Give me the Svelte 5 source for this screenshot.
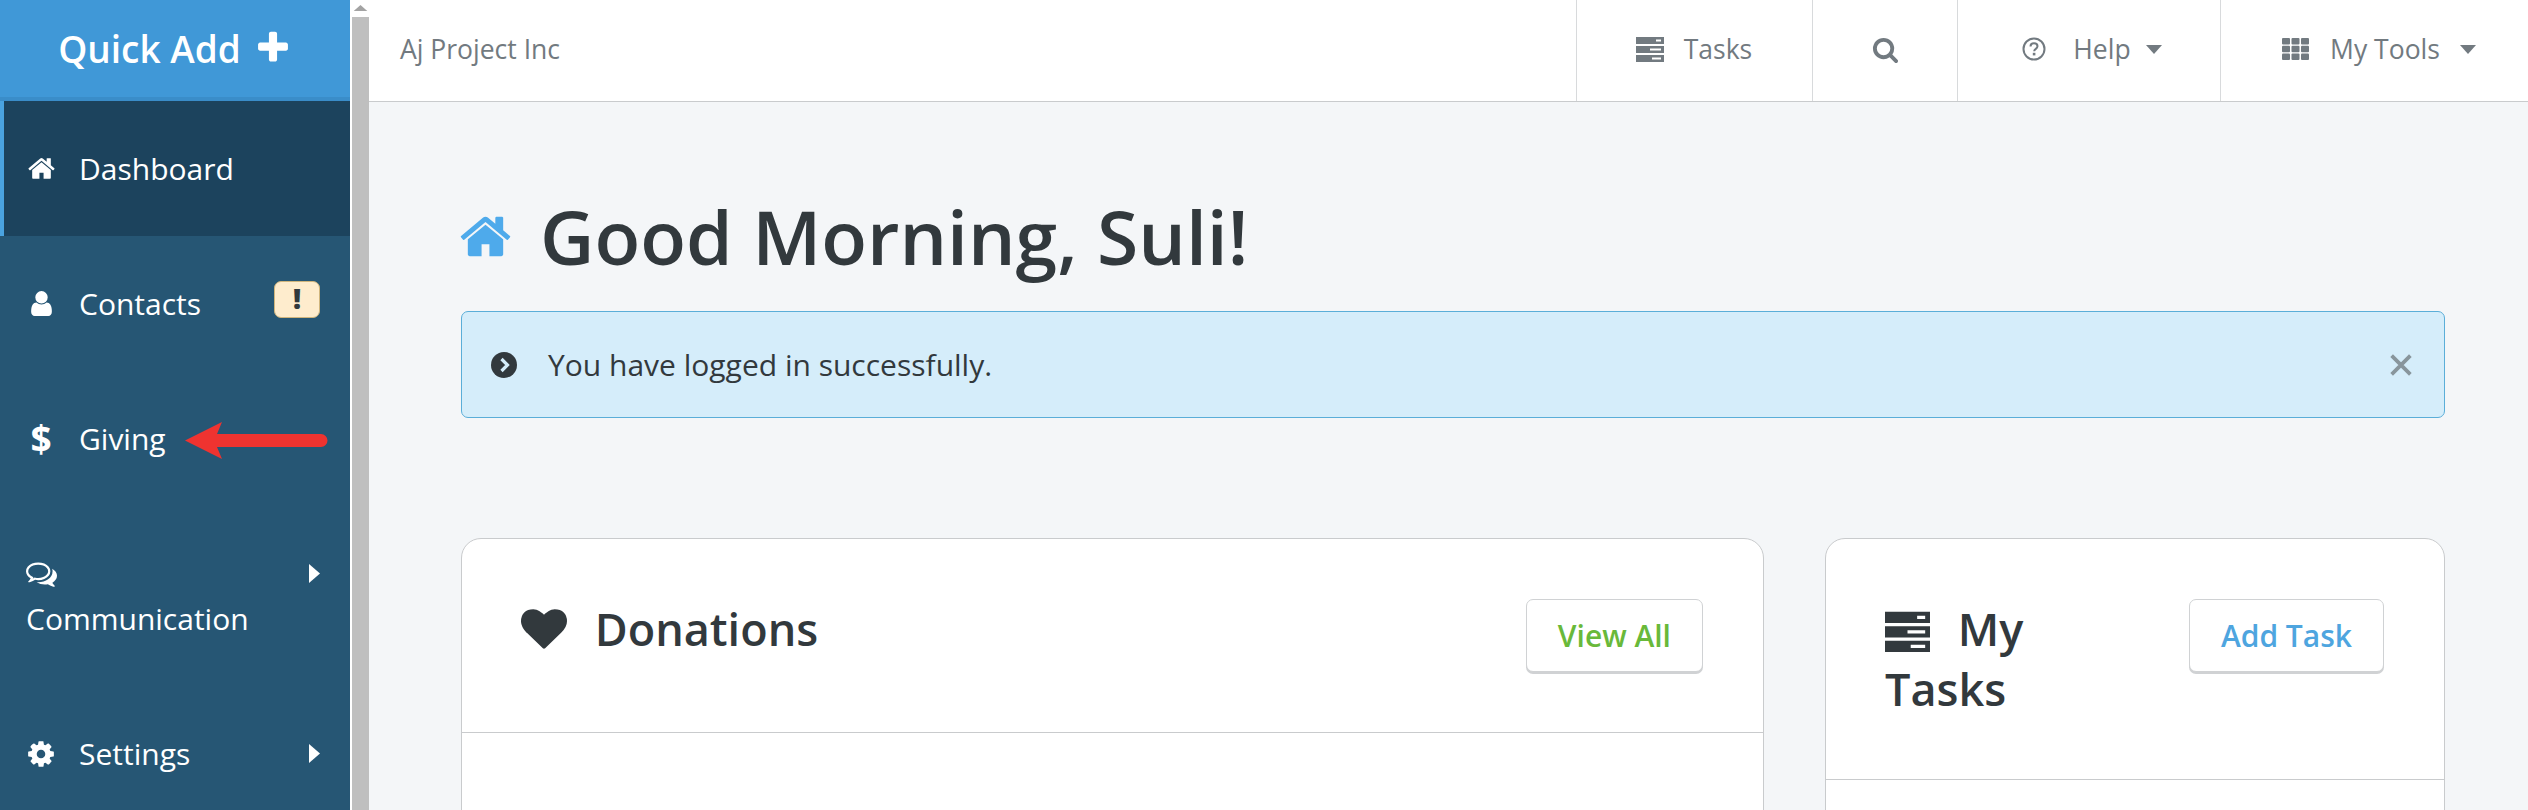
<script lang="ts">
  const FA_HOME = 'M1472 992v480q0 26-19 45t-45 19h-384v-384h-256v384h-384q-26 0-45-19t-19-45v-480q0-1 .5-3t.5-3l575-474 575 474q1 2 1 6zm223-69l-62 74q-8 9-21 11h-3q-13 0-21-7l-692-577-692 577q-12 8-24 7-13-2-21-11l-62-74q-8-10-7-23.500t11-21.500l719-599q32-26 76-26t76 26l244 204v-195q0-14 9-23t23-9h192q14 0 23 9t9 23v408l219 182q10 8 11 21.500t-7 23.500z';
  const FA_USER = 'M1536 1399q0 109-62.500 187t-150.500 78h-854q-88 0-150.500-78t-62.500-187q0-85 8.500-160.500t31.500-152 58.500-131 94-89 134.500-34.500q131 128 313 128t313-128q76 0 134.500 34.500t94 89 58.500 131 31.500 152 8.500 160.500zm-256-887q0 159-112.500 271.500t-271.500 112.500-271.500-112.500-112.500-271.500 112.500-271.500 271.500-112.500 271.500 112.500 112.500 271.500z';
  const FA_COG = 'M1152 896q0-106-75-181t-181-75-181 75-75 181 75 181 181 75 181-75 75-181zm512-109v222q0 12-8 23t-20 13l-185 28q-19 54-39 91 35 50 107 138 10 12 10 25t-9 23q-27 37-99 108t-94 71q-12 0-26-9l-138-108q-44 23-91 38-16 136-29 186-7 28-36 28h-222q-14 0-24.500-8.500t-11.500-21.500l-28-184q-49-16-90-37l-141 107q-10 9-25 9-14 0-25-11-126-114-165-168-7-10-7-23 0-12 8-23 15-21 51-66.500t54-70.500q-27-50-41-99l-183-27q-13-2-21-12.500t-8-23.500v-222q0-12 8-23t19-13l186-28q14-46 39-92-40-57-107-138-10-12-10-24 0-10 9-23 26-36 98.500-107.500t94.500-71.500q13 0 26 10l138 107q44-23 91-38 16-136 29-186 7-28 36-28h222q14 0 24.500 8.500t11.500 21.500l28 184q49 16 90 37l142-107q9-9 24-9 13 0 25 10 129 119 165 170 7 8 7 22 0 12-8 23-15 21-51 66.500t-54 70.500q26 50 41 98l183 28q13 2 21 12.500t8 23.500z';
  const FA_HEART = 'M896 1664q-26 0-44-18l-624-602q-10-8-27.500-26t-55.500-65.500-68-97.500-53.500-121-23.500-138q0-220 127-344t351-124q62 0 126.500 21.500t120 58 95.500 68.500 76 68q36-36 76-68t95.500-68.500 120-58 126.500-21.500q224 0 351 124t127 344q0 221-229 450l-623 600q-18 18-44 18z';
  const FA_SEARCH = 'M1216 832q0-185-131.500-316.500t-316.500-131.500-316.500 131.500-131.500 316.500 131.500 316.500 316.500 131.500 316.500-131.500 131.500-316.500zm512 832q0 52-38 90t-90 38q-54 0-90-38l-343-342q-179 124-399 124-143 0-273.500-55.500t-225-150-150-225-55.500-273.500 55.500-273.500 150-225 225-150 273.500-55.500 273.500 55.500 225 150 150 225 55.500 273.500q0 220-124 399l343 343q37 37 37 90z';
  const FA_PLUS = 'M1600 736v192q0 40-28 68t-68 28h-416v416q0 40-28 68t-68 28h-192q-40 0-68-28t-28-68v-416h-416q-40 0-68-28t-28-68v-192q0-40 28-68t68-28h416v-416q0-40 28-68t68-28h192q40 0 68 28t28 68v416h416q40 0 68 28t28 68z';
  const FA_COMMENTS_O = 'M704 384q-153 0-286 52t-211.500 141-78.500 191q0 82 53 158t149 132l97 56-35 84q34-20 62-39l44-31 53 10q78 14 153 14 153 0 286-52t211.500-141 78.500-191-78.500-191-211.500-141-286-52zm0-128q191 0 353.500 68.500t256.500 186.500 94 257-94 257-256.500 186.500-353.500 68.500q-86 0-176-16-124 88-278 128-36 9-86 16h-3q-11 0-20.500-8t-11.500-21q-1-3-1-6.500t.5-6.500 2-6l2.500-5 3.500-5.500 4-5 4.500-5 4-4.500q5-6 23-25t26-29.500 22.500-29 25-38.500 20.500-44q-124-72-195-177t-71-224q0-139 94-257t256.500-186.500 353.500-68.500zm822 1169q10 24 20.500 44t25 38.500 22.500 29 26 29.500 23 25q1 1 4 4.500t4.500 5 4 5 3.500 5.500l2.500 5 2 6 .5 6.500-1 6.500q-3 14-13 22t-22 7q-50-7-86-16-154-40-278-128-90 16-176 16-271 0-472-132 58 4 88 4 161 0 309-45t264-129q125-92 192-212t67-254q0-77-23-152 129 71 204 178t75 230q0 120-71 224.500t-195 176.500z';
  const SERVER = 'M0 1h28v7H0zM20 3.500v2h5v-2zM0 10h28v7H0zM14 12.500v2h11v-2zM0 19h28v7H0zM16 21.500v2h9v-2z';
</script>

<div class="page">
  <aside class="sidebar">
    <button class="quick-add">
      Quick Add
      <svg class="plus" viewBox="0 0 1792 1792"><path d={FA_PLUS} /></svg>
    </button>
    <nav>
      <a class="nav-item active">
        <span class="nav-icon"><svg width="29" height="29" viewBox="0 0 1792 1792"><path d={FA_HOME} /></svg></span>
        Dashboard
      </a>
      <a class="nav-item">
        <span class="nav-icon"><svg width="29" height="29" viewBox="0 0 1792 1792"><path d={FA_USER} /></svg></span>
        Contacts
        <span class="alert-badge">!</span>
      </a>
      <a class="nav-item">
        <span class="nav-icon dollar">$</span>
        Giving
      </a>
      <a class="nav-item stacked">
        <span class="stack-top">
          <svg class="comments" width="31" height="31" viewBox="0 0 1792 1792"><path d={FA_COMMENTS_O} /></svg>
          <svg class="caret-right" viewBox="0 0 11 19"><path d="M0 0l11 9.500L0 19z" /></svg>
        </span>
        Communication
      </a>
      <a class="nav-item">
        <span class="nav-icon"><svg width="30" height="30" viewBox="0 0 1792 1792"><path d={FA_COG} /></svg></span>
        Settings
        <svg class="caret-right" viewBox="0 0 11 19"><path d="M0 0l11 9.500L0 19z" /></svg>
      </a>
    </nav>
  </aside>

  <div class="scrollbar">
    <div class="scroll-up"></div>
    <div class="scroll-thumb"></div>
  </div>

  <div class="content">
    <header class="topbar">
      <span class="org">Aj Project Inc</span>
      <div class="top-cell tasks">
        <svg width="28" height="26" viewBox="0 0 28 26"><path fill-rule="evenodd" d={SERVER} /></svg>
        Tasks
      </div>
      <div class="top-cell search">
        <svg width="27" height="27" viewBox="0 0 1792 1792"><path d={FA_SEARCH} /></svg>
      </div>
      <div class="top-cell help">
        <svg class="help-icon" width="24" height="24" viewBox="0 0 24 24">
          <circle cx="12" cy="12" r="10.500" />
          <path d="M8.500 9.500c0-2 1.500-3.200 3.500-3.200s3.500 1.200 3.500 3c0 2.600-3.300 2.500-3.300 5" />
          <rect x="10.800" y="15.800" width="2.600" height="2.600" />
        </svg>
        Help
        <svg class="caret-down" viewBox="0 0 16 9"><path d="M0 0h16L8 9z" /></svg>
      </div>
      <div class="top-cell tools">
        <svg width="28" height="24" viewBox="0 0 28 24">
          {#each [0, 9.500, 19] as x}
            {#each [1, 8.700, 16.400] as y}
              <rect {x} {y} width="8" height="6.600" rx="1" />
            {/each}
          {/each}
        </svg>
        My Tools
        <svg class="caret-down" viewBox="0 0 16 9"><path d="M0 0h16L8 9z" /></svg>
      </div>
    </header>

    <main>
      <h1>
        <svg class="title-icon" viewBox="0 0 1792 1792"><path d={FA_HOME} /></svg>
        Good Morning, Suli!
      </h1>

      <div class="notice">
        <svg width="26" height="26" viewBox="0 0 26 26">
          <circle cx="13" cy="13" r="13" fill="#32393d" />
          <path d="M10.500 7l6 6-6 6" fill="none" stroke="#d5edfa" stroke-width="3.200" />
        </svg>
        <span>You have logged in successfully.</span>
        <svg class="close" width="22" height="22" viewBox="0 0 20 20">
          <path d="M1.500 1.500l17 17M18.500 1.500l-17 17" stroke="#88959c" stroke-width="3.400" />
        </svg>
      </div>

      <div class="cards">
        <section class="card">
          <div class="card-head">
            <h2>
              <svg class="card-icon" viewBox="0 0 1792 1792"><path d={FA_HEART} /></svg>
              Donations
            </h2>
            <button class="card-btn green">View All</button>
          </div>
        </section>
        <section class="card">
          <div class="card-head">
            <h2>
              <svg class="card-icon server" viewBox="0 0 28 26"><path fill-rule="evenodd" d={SERVER} /></svg>
              My Tasks
            </h2>
            <button class="card-btn blue">Add Task</button>
          </div>
        </section>
      </div>
    </main>
  </div>

  <svg class="annotation" width="150" height="45" viewBox="0 0 150 45">
    <path d="M0 18.500L37 0l-5 12h104a6.500 6.500 0 0 1 0 13H32l5 12z" fill="#ef3330" />
  </svg>
</div>

<style>
  :global(body) {
    margin: 0;
  }

  h1,
  h2 {
    margin: 0;
  }

  .page {
    position: relative;
    display: flex;
    height: 810px;
    overflow: hidden;
    font-family: 'Open Sans', sans-serif;
    color: #32393d;
    background: #f4f6f8;
  }

  .sidebar {
    flex: 0 0 350px;
    background: #265674;
    color: #fff;
  }

  .quick-add {
    display: flex;
    align-items: center;
    justify-content: center;
    gap: 13px;
    width: 100%;
    height: 101px;
    padding: 2px 0 3px;
    border: 0;
    border-bottom: 4px solid #3a8dc9;
    background: #4098d7;
    color: #fff;
    font: 600 37px 'Open Sans', sans-serif;
  }

  .plus {
    width: 38px;
    height: 38px;
    fill: #fff;
  }

  .nav-item {
    position: relative;
    display: flex;
    align-items: center;
    padding: 45px 30px 45px 26px;
    font-size: 30px;
    line-height: 45px;
    color: #fff;
    fill: #fff;
  }

  .nav-item.active {
    background: #1c435d;
    box-shadow: inset 4px 0 0 #4aa3e0;
  }

  .nav-item.stacked {
    display: block;
  }

  .nav-icon {
    display: flex;
    justify-content: center;
    flex: 0 0 30px;
    margin-right: 23px;
  }

  .dollar {
    font-size: 37px;
    font-weight: 700;
  }

  .alert-badge {
    position: absolute;
    top: 45px;
    right: 30px;
    width: 46px;
    height: 37px;
    box-sizing: border-box;
    border: 1px solid #d0b57c;
    border-radius: 7px;
    background: #feeccd;
    color: #32393d;
    font-size: 28px;
    font-weight: 800;
    line-height: 33px;
    text-align: center;
  }

  .stack-top {
    display: flex;
    align-items: center;
    justify-content: space-between;
    height: 45px;
  }

  .caret-right {
    width: 11px;
    height: 19px;
    margin-left: auto;
  }

  .scrollbar {
    flex: 0 0 19px;
    box-sizing: border-box;
    padding-left: 2px;
    background: #fff;
  }

  .scroll-up {
    height: 17px;
    width: 17px;
    clip-path: polygon(50% 30%, 90% 65%, 10% 65%);
    background: #a3a3a3;
  }

  .scroll-thumb {
    width: 17px;
    height: 793px;
    background: #bfbfbf;
  }

  .content {
    flex: 1;
    min-width: 0;
  }

  .topbar {
    display: flex;
    align-items: center;
    box-sizing: border-box;
    height: 102px;
    border-bottom: 1px solid #c9cbcd;
    background: #fff;
    color: #727a80;
    font-size: 26.500px;
    fill: #727a80;
  }

  .org {
    flex: 1;
    padding: 0 0 3px 31px;
  }

  .top-cell {
    display: flex;
    align-items: center;
    justify-content: center;
    height: 100%;
    box-sizing: border-box;
    padding-bottom: 3px;
    border-left: 1px solid #d8dadc;
  }

  .tasks {
    width: 236px;
    gap: 20px;
    padding-right: 1px;
  }

  .search {
    width: 145px;
  }

  .help {
    width: 263px;
    gap: 27px;
    padding-left: 6px;
  }

  .tools {
    width: 308px;
    gap: 20px;
    padding-left: 9px;
  }

  .help-icon circle,
  .help-icon path {
    fill: none;
    stroke: #727a80;
    stroke-width: 2;
  }

  .caret-down {
    width: 16px;
    height: 9px;
  }

  .help .caret-down {
    margin-left: -12px;
  }

  main {
    padding: 0 83px 0 92px;
  }

  h1 {
    display: flex;
    align-items: center;
    gap: 27px;
    height: 209px;
    padding-top: 60px;
    box-sizing: border-box;
    font-size: 75px;
    font-weight: 600;
    line-height: 1;
  }

  .title-icon {
    width: 55px;
    height: 55px;
    margin-left: -3px;
    fill: #4eaaeb;
  }

  .notice {
    display: flex;
    align-items: center;
    gap: 31px;
    height: 107px;
    box-sizing: border-box;
    padding: 0 32px 0 29px;
    border: 1px solid #5baed8;
    border-radius: 7px;
    background: #d5edfa;
    font-size: 30px;
  }

  .notice span {
    flex: 1;
  }

  .cards {
    display: grid;
    grid-template-columns: 1fr 620px;
    gap: 61px;
    margin-top: 120px;
    align-items: start;
  }

  .card {
    min-height: 400px;
    border: 1px solid #c9cbcd;
    border-radius: 20px;
    background: #fff;
  }

  .card-head {
    display: flex;
    align-items: flex-start;
    justify-content: space-between;
    padding: 60px 60px 60px 59px;
    border-bottom: 1px solid #c9cbcd;
  }

  h2 {
    flex: 0 1 50%;
    font-size: 45px;
    font-weight: 600;
    line-height: 60px;
  }

  .card-icon {
    width: 46px;
    height: 46px;
    margin-right: 16px;
    vertical-align: -6px;
    fill: #32393d;
  }

  .card-icon.server {
    width: 45px;
    height: 42px;
  }

  .card-btn {
    flex: none;
    height: 73px;
    padding: 0 31px;
    border: 1px solid #d0d2d4;
    border-radius: 7px;
    background: #fff;
    box-shadow: 0 2px 0 #d0d2d4;
    font: 600 30px 'Open Sans', sans-serif;
  }

  .green {
    color: #69b93a;
  }

  .blue {
    color: #4ea5df;
  }

  .annotation {
    position: absolute;
    left: 185px;
    top: 422px;
  }
</style>
